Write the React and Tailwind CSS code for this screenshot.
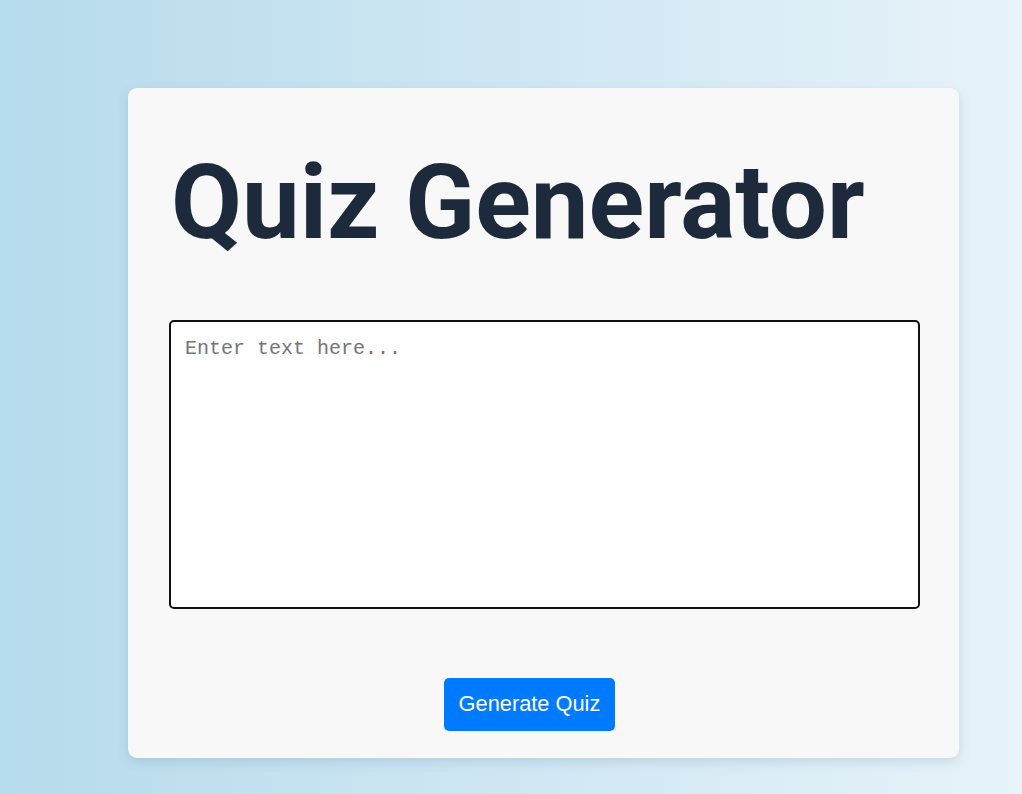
import React, { useState } from "react";

function App() {
    const [text, setText] = useState("");

    return (
        <div className="min-h-screen w-full bg-gradient-to-r from-[#b6dbec] to-[#e8f3fa] pl-[128px] pt-[88px] pb-[36px]">
            {/* CARD */}
            <div className="w-[831px] h-[670px] bg-[#f8f8f8] rounded-[9px] shadow-[0_4px_12px_rgba(60,110,140,0.18)] pl-[41px] pr-[39px] pt-10 pb-[27px] flex flex-col">
                <h1
                    className="-mt-[2px] ml-[2px] text-[103px] font-bold text-[#1d2a3c] leading-normal"
                    style={{ fontFamily: "Roboto, sans-serif" }}
                >
                    Quiz Generator
                </h1>

                <textarea
                    value={text}
                    onChange={(e) => setText(e.target.value)}
                    placeholder="Enter text here..."
                    className="mt-[39px] w-[751px] h-[289px] bg-white border-2 border-[#111] rounded-[5px] px-[14px] py-[12px] text-[20px] text-black placeholder:text-[#757575] resize-none outline-none"
                    style={{ fontFamily: "'Liberation Mono', monospace" }}
                />

                {/* BUTTON */}
                <div className="flex justify-center mt-auto pr-[30px]">
                    <button
                        className="h-[53px] px-[15px] bg-[#007bff] text-white text-[21.8px] rounded-[5px]"
                        style={{ fontFamily: "'Liberation Sans', Arial, sans-serif" }}
                    >
                        Generate Quiz
                    </button>
                </div>
            </div>
        </div>
    );
}

export default App;
